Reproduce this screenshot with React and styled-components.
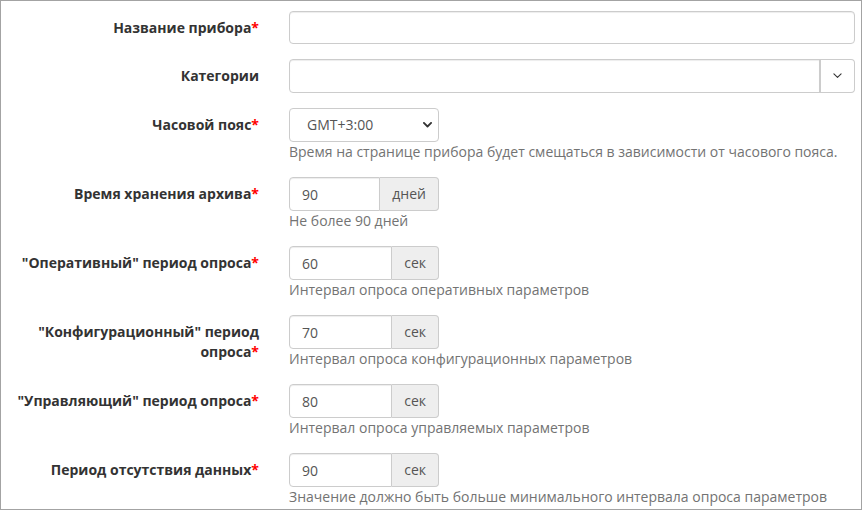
import React from "react"
import styled, { createGlobalStyle } from "styled-components"

const GlobalStyle = createGlobalStyle`
  html, body {
    margin: 0;
    padding: 0;
    background: #fff;
  }
  * {
    box-sizing: border-box;
  }
`

const fields = [
  { label: "Название прибора", required: true, kind: "text" },
  { label: "Категории", kind: "combo" },
  {
    label: "Часовой пояс",
    required: true,
    kind: "select",
    value: "GMT+3:00",
    help: "Время на странице прибора будет смещаться в зависимости от часового пояса.",
  },
  {
    label: "Время хранения архива",
    required: true,
    kind: "addon",
    value: "90",
    unit: "дней",
    help: "Не более 90 дней",
  },
  {
    label: "\"Оперативный\" период опроса",
    required: true,
    kind: "addon",
    value: "60",
    unit: "сек",
    help: "Интервал опроса оперативных параметров",
  },
  {
    label: "\"Конфигурационный\" период опроса",
    required: true,
    kind: "addon",
    value: "70",
    unit: "сек",
    help: "Интервал опроса конфигурационных параметров",
  },
  {
    label: "\"Управляющий\" период опроса",
    required: true,
    kind: "addon",
    value: "80",
    unit: "сек",
    help: "Интервал опроса управляемых параметров",
  },
  {
    label: "Период отсутствия данных",
    required: true,
    kind: "addon",
    value: "90",
    unit: "сек",
    help: "Значение должно быть больше минимального интервала опроса параметров",
  },
]

const Chevron = ({ size = 9, stroke = 1.4 }) => (
  <svg width={size} height={size * 0.6} viewBox="0 0 10 6" fill="none">
    <path
      d="M1 1l4 4 4-4"
      stroke="#333"
      strokeWidth={stroke}
      strokeLinecap="round"
      strokeLinejoin="round"
    />
  </svg>
)

const renderControl = field => {
  switch (field.kind) {
    case "combo":
      return (
        <Group>
          <Input type="text" defaultValue="" $grouped />
          <ToggleButton type="button">
            <Chevron size={9} stroke={1.2} />
          </ToggleButton>
        </Group>
      )
    case "select":
      return (
        <SelectBox>
          <span>{field.value}</span>
          <Chevron size={9} stroke={2} />
        </SelectBox>
      )
    case "addon":
      return (
        <Group $narrow>
          <Input type="text" defaultValue={field.value} $grouped />
          <Addon>{field.unit}</Addon>
        </Group>
      )
    default:
      return <Input type="text" defaultValue="" />
  }
}

const App = () => (
  <>
    <GlobalStyle />
    <Frame>
      {fields.map(field => (
        <Row key={field.label}>
          <Label>
            {field.label}
            {field.required ? <Star>*</Star> : null}
          </Label>
          <Control>
            {renderControl(field)}
            {field.help ? <Help>{field.help}</Help> : null}
          </Control>
        </Row>
      ))}
    </Frame>
  </>
)

export default App

const Frame = styled.div`
  width: 862px;
  height: 510px;
  border: 1px solid #a3a3a3;
  padding-top: 9px;
  overflow: hidden;
  font-family: "Open Sans", "Noto Sans", sans-serif;
  font-size: 14px;
  line-height: 20px;
  color: #333;
`

const Row = styled.div`
  display: grid;
  grid-template-columns: 258px 566px;
  column-gap: 30px;
  margin-bottom: 15px;
  &:first-child {
    margin-top: 1px;
  }
`

const Label = styled.label`
  display: block;
  padding-top: 7px;
  text-align: right;
  font-weight: 700;
  color: #333;
`

const Star = styled.span`
  color: #ff0000;
`

const Control = styled.div`
  display: flex;
  flex-direction: column;
  align-items: flex-start;
`

const Group = styled.div`
  display: flex;
  width: ${props => (props.$narrow ? "150px" : "100%")};
`

const Input = styled.input`
  display: block;
  flex: 1;
  min-width: 0;
  width: 100%;
  height: 34px;
  padding: 6px 12px;
  border: 1px solid #ccc;
  border-radius: ${props => (props.$grouped ? "4px 0 0 4px" : "4px")};
  box-shadow: inset 0 1px 1px rgba(0, 0, 0, 0.075);
  font-family: inherit;
  font-size: 14px;
  color: #555;
  background: #fff;
  outline: none;
`

const Addon = styled.span`
  display: flex;
  align-items: center;
  height: 34px;
  padding: 6px 12px;
  border: 1px solid #ccc;
  border-left: none;
  border-radius: 0 4px 4px 0;
  background: #eee;
  color: #555;
  font-size: 14px;
  white-space: nowrap;
`

const ToggleButton = styled.button`
  display: flex;
  align-items: center;
  justify-content: center;
  width: 36px;
  height: 34px;
  padding: 0;
  border: 1px solid #ccc;
  border-left: 2px solid #ccc;
  margin-left: -1px;
  border-radius: 0 4px 4px 0;
  background: #fff;
  cursor: pointer;
`

const SelectBox = styled.div`
  display: flex;
  align-items: center;
  justify-content: space-between;
  width: 150px;
  height: 34px;
  padding: 0 6px 0 17px;
  border: 1px solid #ccc;
  border-radius: 4px;
  background: #fff;
  color: #555;
  font-size: 14px;
`

const Help = styled.span`
  display: block;
  color: #737373;
  font-size: 14px;
  line-height: 20px;
`
